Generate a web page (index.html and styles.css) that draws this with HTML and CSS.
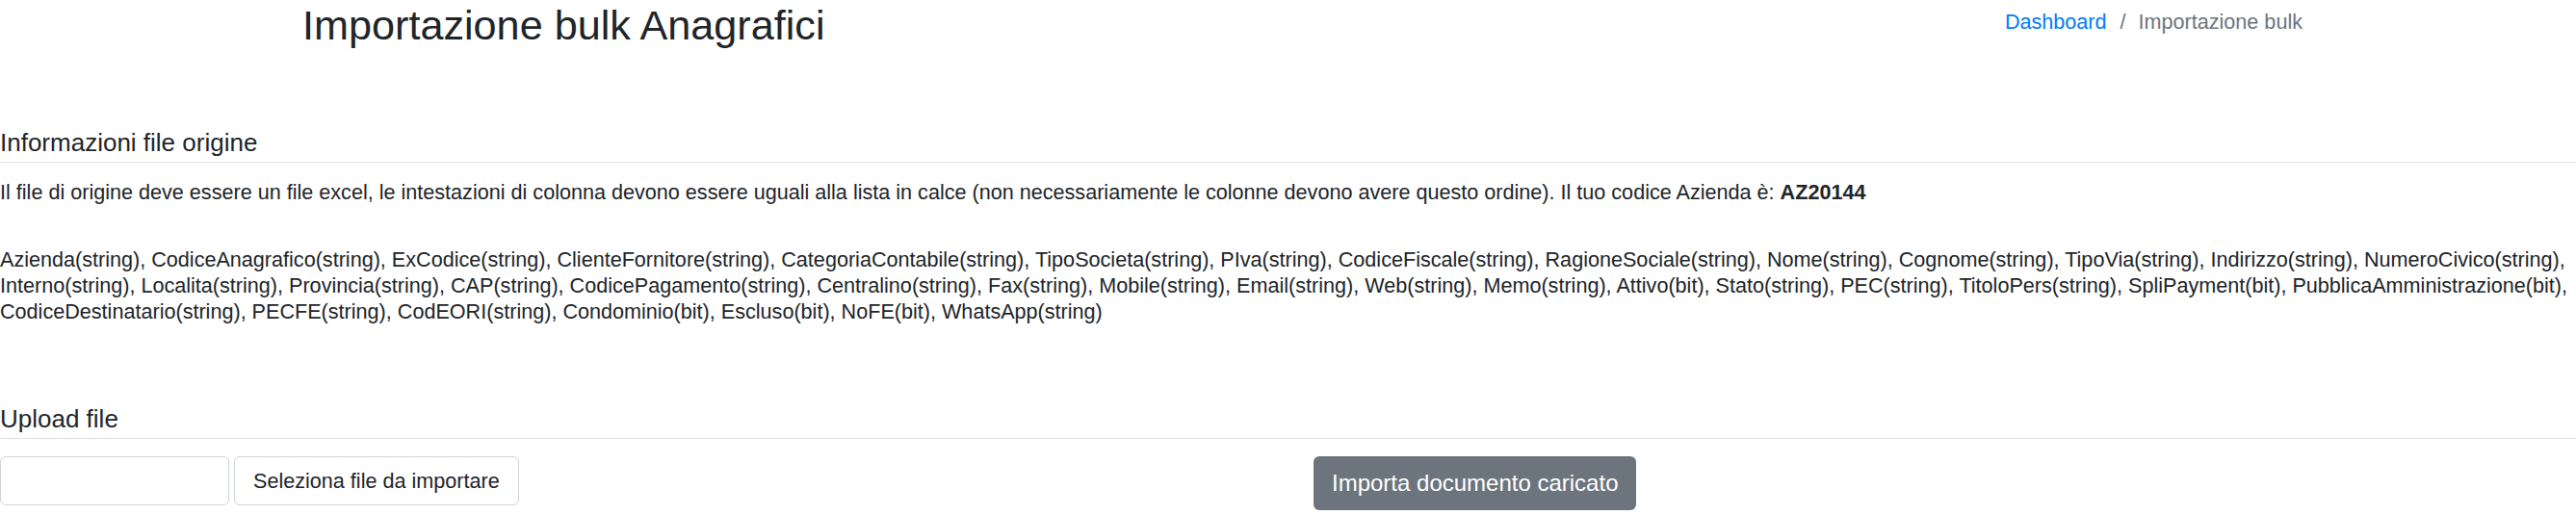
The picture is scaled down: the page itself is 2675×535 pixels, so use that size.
FILE: index.html
```html
<!DOCTYPE html>
<html lang="it">
<head>
    <meta charset="UTF-8">
    <meta name="viewport" content="width=device-width, initial-scale=1.0">
    <title>Importazione bulk Anagrafici</title>
    <link rel="stylesheet" href="styles.css">
</head>
<body>
    <!-- intestazione pagina -->
    <div class="content-header">
        <h1 class="page-title">Importazione bulk Anagrafici</h1>
        <ol class="breadcrumb">
            <li><a href="#">Dashboard</a></li>
            <li class="sep">/</li>
            <li class="active">Importazione bulk</li>
        </ol>
    </div>

    <!-- info file -->
    <div class="section section-info">
        <h3 class="section-title">Informazioni file origine</h3>
        <p class="intro">Il file di origine deve essere un file excel, le intestazioni di colonna devono essere uguali alla lista in calce (non necessariamente le colonne devono avere questo ordine). Il tuo codice Azienda è: <b>AZ20144</b></p>
        <p class="columns">Azienda(string), CodiceAnagrafico(string), ExCodice(string), ClienteFornitore(string), CategoriaContabile(string), TipoSocieta(string), PIva(string), CodiceFiscale(string), RagioneSociale(string), Nome(string), Cognome(string), TipoVia(string), Indirizzo(string), NumeroCivico(string), Interno(string), Localita(string), Provincia(string), CAP(string), CodicePagamento(string), Centralino(string), Fax(string), Mobile(string), Email(string), Web(string), Memo(string), Attivo(bit), Stato(string), PEC(string), TitoloPers(string), SpliPayment(bit), PubblicaAmministrazione(bit), CodiceDestinatario(string), PECFE(string), CodEORI(string), Condominio(bit), Escluso(bit), NoFE(bit), WhatsApp(string)</p>
    </div>

    <!-- upload -->
    <div class="section section-upload">
        <h3 class="section-title">Upload file</h3>
        <div class="upload-row">
            <div class="file-group">
                <span class="file-name"></span>
                <button class="btn btn-light">Seleziona file da importare</button>
            </div>
            <div class="upload-actions">
                <button class="btn btn-secondary">Importa documento caricato</button>
            </div>
        </div>
    </div>
</body>
</html>
```

FILE: styles.css
```css
body {
    margin: 0;
    font-family: "Liberation Sans", Arial, sans-serif;
    color: #212529;
    background: #fff;
}
.content-header {
    display: flex;
    justify-content: space-between;
    align-items: flex-start;
    padding: 1px 284px 0 314px;
}
.page-title {
    margin: 0;
    font-size: 43.2px;
    font-weight: 400;
    line-height: 1.2;
}
.breadcrumb {
    display: flex;
    list-style: none;
    margin: 6px 0 0;
    padding: 0;
    font-size: 21.6px;
    line-height: 1.5;
}
.breadcrumb a {
    color: #007bff;
    text-decoration: none;
}
.breadcrumb .sep {
    color: #6c757d;
    padding: 0 13px 0 14px;
}
.breadcrumb .active {
    color: #6c757d;
}
.section-title {
    margin: 0;
    font-size: 26px;
    font-weight: 400;
    line-height: 1.2;
    padding-bottom: 4px;
    border-bottom: 1px solid #dee2e6;
}
.section-info {
    margin-top: 80px;
}
.section-info p {
    margin: 0;
    font-size: 21.6px;
    line-height: 27px;
}
.intro {
    padding-top: 17px;
}
.columns {
    padding-top: 43px;
}
.section-upload {
    margin-top: 83px;
}
.upload-row {
    display: grid;
    grid-template-columns: 1364px 1fr;
    padding-top: 18px;
}
.file-group {
    display: flex;
    gap: 5px;
    height: 51px;
}
.file-name {
    display: block;
    width: 238px;
    box-sizing: border-box;
    border: 1px solid #ced4da;
    border-radius: 6px;
}
.btn {
    font-family: inherit;
    font-size: 24px;
    line-height: 1.5;
    border: 1px solid transparent;
    border-radius: 6px;
    padding: 9px 18px;
    cursor: pointer;
}
.btn-light {
    font-size: 21.6px;
    background: #fff;
    color: #212529;
    border-color: #ced4da;
    padding: 0 19px;
}
.btn-secondary {
    background: #6c757d;
    color: #fff;
    height: 56px;
    padding: 0 18px;
}
```
